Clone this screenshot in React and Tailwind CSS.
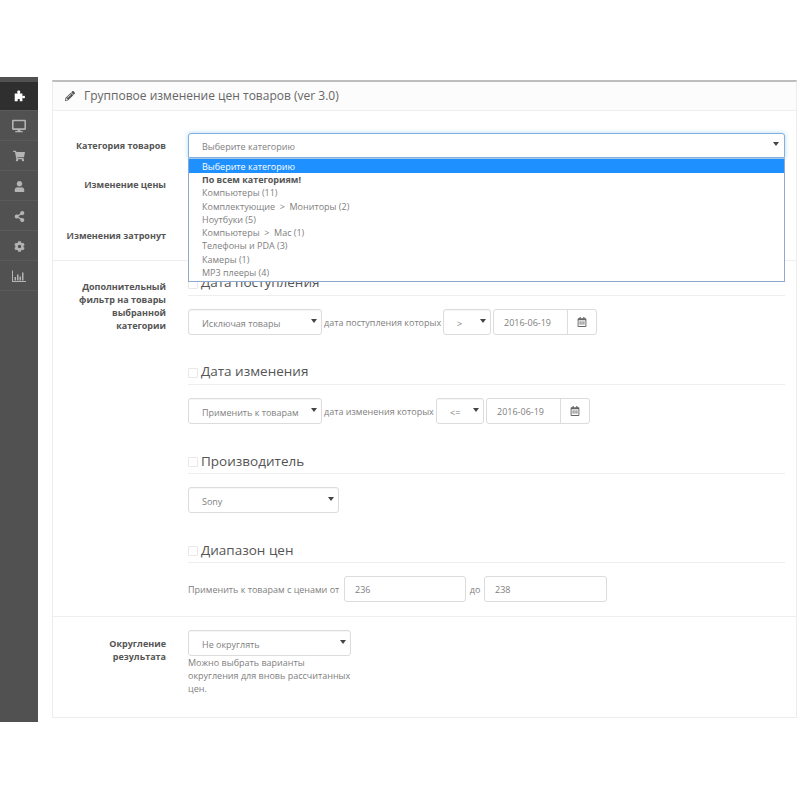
import { FaDesktop, FaShoppingCart, FaUser, FaShareAlt, FaCog, FaPencilAlt, FaRegCalendarAlt } from "react-icons/fa"

const PuzzleIcon = ({ size }) => (
    <svg width={size} height={size} viewBox="0 0 14 14" fill="currentColor">
        <path d="M2 4h3.200c.3 0 .4-.3.2-.6-.3-.4-.5-.7-.5-1.200C4.900 1.200 5.800.6 6.700.6s1.800.6 1.800 1.600c0 .5-.2.8-.5 1.200-.2.3-.1.6.2.6H11v3c0 .3.3.4.6.2.4-.3.7-.5 1.200-.5.8 0 1.200.7 1.200 1.500s-.4 1.500-1.200 1.500c-.5 0-.8-.2-1.200-.5-.3-.2-.6-.1-.6.2V13H8c-.3 0-.4-.3-.2-.6.2-.3.3-.5.3-.9 0-.7-.7-1.100-1.400-1.100s-1.400.4-1.400 1.100c0 .4.1.6.3.9.2.3.1.6-.2.6H2z" />
    </svg>
)

const ChartIcon = ({ size }) => (
    <svg width={size} height={size} viewBox="0 0 14 14" fill="currentColor">
        <path d="M0 1.500h1v10.500h13v1H0z" />
        <path d="M2.500 8h1.500v3.500H2.500zM5 5.500h1.500v6H5zM7.500 7.500H9v4H7.500zM10 3.500h1.500v8H10z" />
    </svg>
)

const navItems = [
    { icon: PuzzleIcon, active: true, size: 12 },
    { icon: FaDesktop, size: 14 },
    { icon: FaShoppingCart, size: 12 },
    { icon: FaUser, size: 11 },
    { icon: FaShareAlt, size: 11 },
    { icon: FaCog, size: 11 },
    { icon: ChartIcon, size: 14 },
]

const categories = [
    "Компьютеры (11)",
    "Комплектующие\u00a0\u00a0>\u00a0\u00a0Мониторы (2)",
    "Ноутбуки (5)",
    "Компьютеры\u00a0\u00a0>\u00a0\u00a0Mac (1)",
    "Телефоны и PDA (3)",
    "Камеры (1)",
    "MP3 плееры (4)",
]

const Arrow = () => <span className="w-0 h-0 border-x-[3px] border-x-transparent border-t-[4px] border-t-[#444]"></span>

const Select = ({ text, className, pad = "pl-[13px]" }) => (
    <div className={`h-[26px] shrink-0 flex items-center justify-between border border-[#dcdcdc] rounded-[3px] bg-white shadow-[inset_0_1px_1px_rgba(0,0,0,0.04)] pr-[4px] ${pad} ${className}`}>
        <span className="text-[9px] text-[#808080] pt-[3px]">{text}</span>
        <span className="flex mb-[2px]"><Arrow /></span>
    </div>
)

const DateInput = ({ value }) => (
    <div className="ml-[2px] h-[26px] w-[104px] shrink-0 flex border border-[#dcdcdc] rounded-[3px] bg-white">
        <div className="w-[74px] flex items-center pl-[10px] pt-[1px] text-[9px] text-[#808080] border-r border-[#dcdcdc]">{value}</div>
        <div className="flex-1 flex items-center justify-center text-[#666]"><FaRegCalendarAlt size={10} /></div>
    </div>
)

const FilterHeading = ({ title, className = "pb-[1px]" }) => (
    <div className="h-[24px] flex items-center border-b border-[#eee] mb-[13px]">
        <span className="w-[10px] h-[10px] border border-[#e8e8e8] rounded-[1px] mr-[3px] bg-white"></span>
        <span className={`text-[13.5px] text-[#555] leading-none ${className}`}>{title}</span>
    </div>
)

const Label = ({ children, className = "" }) => (
    <div className={`w-[113px] shrink-0 text-right text-[9px] leading-[13px] font-bold text-[#555] ${className}`}>{children}</div>
)

const TextInput = ({ value, className = "w-[122px]" }) => (
    <div className={`h-[26px] shrink-0 flex items-center pl-[10px] pt-[1px] border border-[#dcdcdc] rounded-[3px] text-[9px] text-[#808080] bg-white ${className}`}>{value}</div>
)

export default function App() {
    return (
        <div className="w-[800px] h-[800px] bg-white pt-[77px] flex font-['Open_Sans',sans-serif] overflow-hidden">
            <aside className="w-[38px] h-[645px] shrink-0 bg-[#515151] pt-[5px]">
                {navItems.map((item, i) => (
                    <div key={i} className={`flex items-center justify-center border-b border-[#5a5a5a] ${item.active ? "h-[29px] bg-[#2f2f2f] text-white" : "h-[30px] pt-[1px] text-[#b4b4b4]"}`}>
                        <item.icon size={item.size} />
                    </div>
                ))}
            </aside>

            <main className="ml-[14px] mt-[3px] w-[745px] h-[638px] border border-[#ececec] border-t-2 border-t-[#bdbdbd]">
                <div className="h-[29px] flex items-center pl-[12px] bg-[#fcfcfc] border-b border-[#eee] text-[12px] text-[#666]">
                    <FaPencilAlt size={10} className="mr-[9px] text-[#555]" />
                    Групповое изменение цен товаров (ver 3.0)
                </div>

                <div className="relative h-[150px] flex border-b border-[#eee] pt-[22px]">
                    <div className="flex flex-col">
                        <Label className="mt-[6px]">Категория товаров</Label>
                        <Label className="mt-[26px]">Изменение цены</Label>
                        <Label className="mt-[38px]">Изменения затронут</Label>
                    </div>
                    <div className="absolute z-10 left-[135px] top-[22px] w-[597px]">
                        <div className="h-[25px] flex items-center justify-between pl-[13px] pr-[5px] border border-[#7fb2e0] rounded-t-[3px] bg-white shadow-[0_0_4px_rgba(102,175,233,0.5)]">
                            <span className="text-[9px] text-[#808080] pt-[2px]">Выберите категорию</span>
                            <span className="flex mb-[3px]"><Arrow /></span>
                        </div>
                        <div className="h-[124px] border border-[#8fa9cc] border-t-[#a8c8e8] bg-white text-[9px] text-[#808080] leading-[13.3px]">
                            <div className="pl-[13px] h-[14px] pt-[1px] bg-[#1e90ff] text-white">Выберите категорию</div>
                            <div className="pl-[13px] font-bold text-[#555]">По всем категориям!</div>
                            {categories.map((c) => (
                                <div key={c} className="pl-[13px]">{c}</div>
                            ))}
                        </div>
                    </div>
                </div>

                <div className="flex h-[356px] pt-[11px] border-b border-[#eee]">
                    <Label className="mt-[8px]">Дополнительный<br />фильтр на товары<br />выбранной<br />категории</Label>
                    <div className="ml-[22px] w-[597px]">
                        <FilterHeading title="Дата поступления" />
                        <div className="flex items-center mb-[26px]">
                            <Select text="Исключая товары" className="w-[134px]" />
                            <span className="ml-[2px] w-[119px] pt-[1px] text-[9px] text-[#808080] whitespace-nowrap">дата поступления которых</span>
                            <Select text=">" className="w-[48px]" />
                            <DateInput value="2016-06-19" />
                        </div>

                        <FilterHeading title="Дата изменения" />
                        <div className="flex items-center mb-[26px]">
                            <Select text="Применить к товарам" className="w-[134px]" />
                            <span className="ml-[2px] w-[112px] pt-[1px] text-[9px] text-[#808080] whitespace-nowrap">дата изменения которых</span>
                            <Select text="<=" className="w-[48px]" />
                            <DateInput value="2016-06-19" />
                        </div>

                        <FilterHeading title="Производитель" className="pt-[1px]" />
                        <div className="flex mb-[26px]">
                            <Select text="Sony" className="w-[151px]" />
                        </div>

                        <FilterHeading title="Диапазон цен" className="pt-[1px]" />
                        <div className="flex items-center text-[9px] text-[#808080]">
                            <span className="w-[156px] pt-[1px] whitespace-nowrap">Применить к товарам с ценами от</span>
                            <TextInput value="236" />
                            <span className="w-[18px] pt-[1px] text-center">до</span>
                            <TextInput value="238" className="w-[123px]" />
                        </div>
                    </div>
                </div>

                <div className="flex pt-[13px]">
                    <Label className="mt-[7px]">Округление<br />результата</Label>
                    <div className="ml-[22px] w-[163px]">
                        <Select text="Не округлять" className="w-[163px]" />
                        <p className="text-[9px] leading-[13px] text-[#808080]">Можно выбрать варианты округления для вновь рассчитанных цен.</p>
                    </div>
                </div>
            </main>
        </div>
    )
}
